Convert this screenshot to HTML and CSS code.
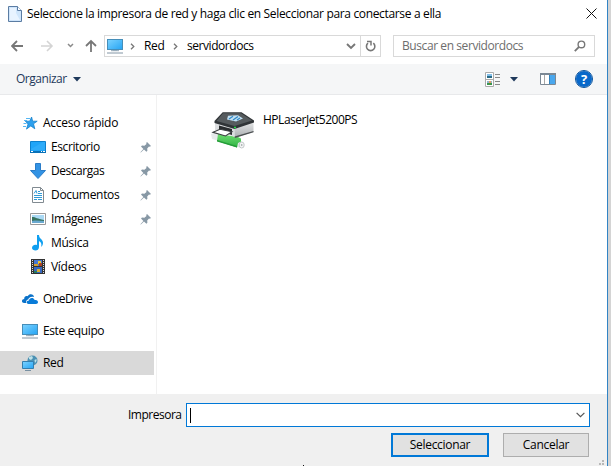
FILE: index.html
```html
<!DOCTYPE html>
<html lang="es">
<head>
<meta charset="utf-8">
<title>Seleccionar impresora</title>
<link rel="stylesheet" href="styles.css">
</head>
<body>
<svg class="defs" width="0" height="0">
  <defs>
    <linearGradient id="screen" x1="0" y1="0" x2="1" y2="1"><stop offset="0" stop-color="#7dd3ff"/><stop offset="1" stop-color="#24a4f4"/></linearGradient>
    <linearGradient id="side" x1="0" y1="0" x2="0" y2="1"><stop offset="0" stop-color="#e8e9ea"/><stop offset="1" stop-color="#a9adb0"/></linearGradient>
    <linearGradient id="roll" x1="0" y1="0" x2="0" y2="1"><stop offset="0" stop-color="#6fdc70"/><stop offset="1" stop-color="#2fb344"/></linearGradient>
    <symbol id="pc" viewBox="0 0 16 16"><rect x=".5" y="1.5" width="15" height="10" fill="url(#screen)" stroke="#468eb9"/><path d="M6 12h4v1H6z" fill="#b9c7d2"/><path d="M4 12.700h8" stroke="#8fa5b5"/><path d="M0 15h16" stroke="#8295a5"/></symbol>
    <symbol id="pin" viewBox="0 0 11 11"><path d="M7 0l4 4-1.200.8-.8-.3-1.800 2 .2 2.300-1 .9L4 7.400.8 10.600l-.4-.4L3.400 7 1 4.500l1-.9 2.400.1L6.500 2 6.200.9z" fill="#8798a5"/></symbol>
  </defs>
</svg>
<div class="window">
  <header class="titlebar">
    <svg class="doc" width="14" height="16" viewBox="0 0 14 16"><path d="M.5.5h9l4 4v11H.5z" fill="#cfe5fb" stroke="#5b7ca3"/><path d="M2 2h6v5l4 7H2z" fill="#e8f3ff"/><path d="M9.500.5v4h4" fill="#fff" stroke="#5b7ca3"/></svg>
    <span class="t title">Seleccione la impresora de red y haga clic en Seleccionar para conectarse a ella</span>
    <svg class="close" width="11" height="11" viewBox="0 0 11 11"><path d="M.5.5l10 10M10.500.5l-10 10" stroke="#111" fill="none"/></svg>
  </header>
  <nav class="navbar">
    <svg class="arrows" width="88" height="14" viewBox="0 0 88 14" fill="none">
      <path d="M12 7H1M6 2L1 7l5 5" stroke="#777" stroke-width="1.800"/>
      <path d="M30 7h11M36 2l5 5-5 5" stroke="#d4d4d4" stroke-width="1.600"/>
      <path d="M57 5l2.500 2.500L62 5" stroke="#8a8a8a" stroke-width="1.500"/>
      <path d="M80 13V2M75 7l5-5 5 5" stroke="#777" stroke-width="1.800"/>
    </svg>
    <div class="address">
      <svg width="16" height="16"><use href="#pc"/></svg>
      <svg class="sep" width="5" height="7" viewBox="0 0 5 7"><path d="M1 .7l2.800 2.800L1 6.300" fill="none" stroke="#777" stroke-width="1.300"/></svg>
      <span class="t red">Red</span>
      <svg class="sep" width="5" height="7" viewBox="0 0 5 7"><path d="M1 .7l2.800 2.800L1 6.300" fill="none" stroke="#777" stroke-width="1.300"/></svg>
      <span class="t server">servidordocs</span>
      <svg class="drop" width="10" height="7" viewBox="0 0 10 7"><path d="M1 1l4 4 4-4" fill="none" stroke="#777" stroke-width="1.900"/></svg>
      <div class="refresh"><svg width="11" height="12" viewBox="0 0 11 12"><path d="M8.300 3.200A4.200 4.200 0 1 1 3 3.200" fill="none" stroke="#777" stroke-width="1.600"/><path d="M2 1.600h4v4" fill="none" stroke="#777" stroke-width="1.500"/></svg></div>
    </div>
    <div class="search"><span class="t query">Buscar en servidordocs</span>
      <svg width="12" height="12" viewBox="0 0 12 12"><circle cx="7.400" cy="4.400" r="3.300" fill="none" stroke="#777" stroke-width="1.400"/><path d="M5 6.900L.8 11.200" stroke="#777" stroke-width="1.800"/></svg></div>
  </nav>
  <div class="toolbar">
    <span class="t organize">Organizar</span>
    <svg class="caret" width="8" height="5" viewBox="0 0 8 5"><path d="M0 0h8L4 4.500z" fill="#1e395b"/></svg>
    <svg class="view" width="16" height="15" viewBox="0 0 16 15"><path d="M.5.5h8v14h-8zM.5 7.500h8" fill="#fff" stroke="#aaa"/><path d="M2 2h5v2H2z" fill="#82bee9"/><path d="M2 4h5v2H2z" fill="#286a86"/><path d="M2 9h5v2H2z" fill="#91b5cc"/><path d="M2 11h5v2H2z" fill="#3b944b"/><path d="M4 9h2v2H4z" fill="#e5a064"/><path d="M10 2.500h5M10 5.500h5M10 9.500h5M10 12.500h5" stroke="#888"/></svg>
    <svg class="caret viewcaret" width="8" height="5" viewBox="0 0 8 5"><path d="M0 0h8L4 4.500z" fill="#1e395b"/></svg>
    <svg class="pane" width="16" height="12" viewBox="0 0 16 12"><path d="M.5.500h15v11H.5z" fill="#fff" stroke="#7b8894"/><path d="M0 0h16v2H0z" fill="#7b8894"/><path d="M4.500 2v9" stroke="#a8a8a8"/><path d="M10 2h5v9h-5z" fill="#49a7ee"/><path d="M9.500 2v9" stroke="#3684bd"/></svg>
    <span class="help">?</span>
  </div>
  <main class="content">
    <aside class="tree">
      <div class="row root"><svg width="16" height="16" viewBox="0 0 16 16"><path d="M9.600 2l1 4.200h4.600l-3.700 2.600 1.300 5-4-2.900-4.300 3.200 1.600-5.200L3.300 6.200h4.400z" fill="#2ca0ee" stroke="#1682cb" stroke-width=".8"/><path d="M4 3.500h4M2 5.500h3M1.500 8.500h3M1 11.500h3" stroke="#55b6f3"/></svg><span class="t quick">Acceso rápido</span></div>
      <div class="row child"><svg width="16" height="16" viewBox="0 0 16 16"><path d="M.5 2.500h15v11H.5z" fill="#20a5f8" stroke="#0e80cc"/><path d="M1 10L13 3h2v8H1z" fill="#42b6fb" opacity=".45"/><path d="M0 12h16v2H0z" fill="#0871b8"/><path d="M1 12.500h2M11 12.500h1M13 12.500h2" stroke="#fff"/></svg><span class="t desk">Escritorio</span><svg class="pin" width="11" height="11"><use href="#pin"/></svg></div>
      <div class="row child"><svg width="16" height="16" viewBox="0 0 16 16"><path d="M5.500.5h5v7h5L8 15.500.5 7.500h5z" fill="#3293e4" stroke="#2a7cc8"/></svg><span class="t down">Descargas</span><svg class="pin" width="11" height="11"><use href="#pin"/></svg></div>
      <div class="row child"><svg width="16" height="16" viewBox="0 0 16 16"><path d="M2.500.5h8l3 3v12h-11z" fill="#fff" stroke="#818a91"/><path d="M10.500.5v3h3" fill="none" stroke="#818a91"/><path d="M4 6.500l2-3 1 3M8 4.500h2M8 6.500h4M4 8.500h8M4 10.500h8M4 12.500h3M8 12.500h4" fill="none" stroke="#309bd8"/></svg><span class="t docs">Documentos</span><svg class="pin" width="11" height="11"><use href="#pin"/></svg></div>
      <div class="row child"><svg width="16" height="16" viewBox="0 0 16 16"><path d="M.5 2.500h15v11H.5z" fill="#fff" stroke="#999"/><path d="M2 4h12v8H2z" fill="#aad9f4"/><path d="M2 6c4 0 5 2 12 3v1H2z" fill="#37735f"/><path d="M2 10c5-1 8 0 12 0v2H2z" fill="#6aa9d0"/></svg><span class="t imgs">Imágenes</span><svg class="pin" width="11" height="11"><use href="#pin"/></svg></div>
      <div class="row child"><svg width="16" height="16" viewBox="0 0 16 16"><path d="M7 0h2c0 4 4 4 4 8 0 2-1 3-2 4 1-3 0-5-2-6v6c0 5-7 4-7 1 0-2 2-4 5-3z" fill="#109ff0"/></svg><span class="t music">Música</span></div>
      <div class="row child"><svg width="16" height="16" viewBox="0 0 16 16"><path d="M1 0h14v15H1z" fill="#333"/><path d="M4 1h8v6H4z" fill="#4777d0"/><path d="M4 8h8v6H4z" fill="#3768bf"/><path d="M8 2h3v3H8z" fill="#edc52e"/><path d="M9 4h3v3H9z" fill="#a94227"/><path d="M4 5h4v2H4z" fill="#d69e2d"/><path d="M7 10h3v3H7z" fill="#d6aa31"/><path d="M4 12h3v2H4z" fill="#267b62"/><path d="M2.500 1v14M13.500 1v14" stroke="#ddd" stroke-dasharray="1 1"/></svg><span class="t video">Vídeos</span></div>
      <div class="row root gap"><svg width="16" height="16" viewBox="0 0 16 16"><path d="M2 12C-1 12-.5 8 2.200 8 2 5.500 4 4.500 5.500 5.200 7.500 1.800 12 3 12 6 8.500 5 6.500 7 6.300 8.600 4 9 3.800 11 4.300 12z" fill="#0b72c9"/><path d="M6.500 13C4 13 4 9.500 7 9.600 7 6.500 11.500 5.800 12.700 9 15 8.500 16 10 16 11.300 16 12.500 15 13 14 13z" fill="#087bd8"/></svg><span class="t one">OneDrive</span></div>
      <div class="row root gap"><svg width="16" height="16"><use href="#pc"/></svg><span class="t equipo">Este equipo</span></div>
      <div class="row root gap selected"><svg width="16" height="16" viewBox="0 0 16 16"><circle cx="10.500" cy="5.500" r="5" fill="#4c91b3"/><path d="M7 2l3-1 1 2-2 2-2-1zM12.500 5l2-1v2l-1.500 2z" fill="#bfe2e9"/><path d="M.5 6.500h11v7H.5z" fill="url(#screen)" stroke="#347fae"/><path d="M3 15.500h6" stroke="#7890a2"/></svg><span class="t">Red</span></div>
    </aside>
    <section class="files">
      <svg class="printer" width="46" height="40" viewBox="0 0 46 40">
        <path d="M1 24l5-2 5 2-2 7-7-2z" fill="#e6e9ea"/>
        <path d="M26 31l6 .8 1.500 6-7-.8z" fill="#e1e5e6"/>
        <path d="M8 24l20 3 3 1.500v3L28 33l-1 4.500L7 31z" fill="url(#roll)"/>
        <path d="M7 30l20 6v1.500L7 31.500z" fill="#249c38"/>
        <ellipse cx="31.700" cy="35" rx="2.500" ry="3" fill="#f4f5f5" stroke="#c4c8ca"/><ellipse cx="31.700" cy="35" rx=".8" ry="1.100" fill="#a8adaf"/>
        <path d="M5 12l20 6v9L5 20z" fill="#dbdddf"/>
        <path d="M24.500 17.500l19-6.500v11L25 27.500z" fill="url(#side)"/>
        <path d="M12.700 2.300L31.500 2.300 44 10.500v2L24.500 19 4.500 13v-2z" fill="#303437"/>
        <path d="M13 3.300h18L42 10.500 24.500 16 6.500 11z" fill="#565b5e"/>
        <path d="M18 5.700l10-.5 5 3.300-7 3-9-2z" fill="#c2e0f3"/>
        <path d="M19 9l4-2.700M23 10l5-3.500M27 10l3-2" stroke="#318ac7" stroke-width="1.300"/>
        <path d="M9 15.500l13 3.500v6L9 21z" fill="#292c2e"/>
        <path d="M3 22.300l7-3 12 2.400-6.500 4.300z" fill="#fff" stroke="#3b3e40" stroke-width="1.100"/>
        <path d="M24.500 26.500L43.500 21v1.300L25 28z" fill="#4c5052"/>
        <path d="M24 17.500h2" stroke="#21df46" stroke-width="1.300"/>
      </svg>
      <span class="t hp">HPLaserJet5200PS</span>
    </section>
  </main>
  <footer class="footer">
    <div class="field"><span class="t label">Impresora</span><div class="combo"><i class="cursor"></i><svg width="9" height="6" viewBox="0 0 9 6"><path d="M.6.800l3.900 3.900L8.400.8" fill="none" stroke="#555" stroke-width="1.200"/></svg></div></div>
    <div class="buttons"><div class="btn primary"><span class="t select">Seleccionar</span></div><div class="btn"><span class="t cancel">Cancelar</span></div></div>
    <svg class="grip" width="5" height="5" viewBox="0 0 5 5"><path d="M3 0h2v2H3zM0 3h2v2H0zM3 3h2v2H3z" fill="#b8b8b8"/></svg>
    <i class="speck"></i>
  </footer>
</div>
</body>
</html>
```
FILE: styles.css
```css
* { box-sizing: border-box; }
body { margin: 0; background: #d4d4d4; font: 12px/16px "Open Sans", "Noto Sans", sans-serif; color: #000; overflow: hidden; }
svg { display: block; flex: none; }
.defs { position: absolute; }
.t { white-space: nowrap; flex: none; font-size: 12px; letter-spacing: -0.3px; }
.window { width: 608px; height: 466px; border-right: 1px solid #3284c5; background: #fff; display: flex; flex-direction: column; }
.titlebar { height: 30px; display: flex; align-items: center; padding: 0 10px 3px 8px; }
.title { margin-left: 5px; letter-spacing: -0.34px; }
.close { margin-left: auto; }
.navbar { height: 34px; display: flex; padding: 5px 12px 7px 11px; }
.arrows { margin-top: 4px; }
.address { margin-left: 5px; width: 277px; height: 22px; border: 1px solid #d9d9d9; display: flex; align-items: center; padding-left: 2px; }
.sep { margin: 0 9px 0 7px; }
.address .red { width: 22px; }
.server { letter-spacing: -0.45px; }
.drop { margin-left: auto; margin-right: 4px; }
.refresh { width: 20px; height: 20px; border-left: 1px solid #d9d9d9; display: flex; align-items: center; justify-content: center; }
.search { margin-left: 12px; width: 202px; height: 22px; border: 1px solid #d9d9d9; display: flex; align-items: center; justify-content: space-between; padding: 0 8px; color: #6d6d6d; }
.query { letter-spacing: -0.42px; }
.toolbar { height: 31px; background: #f5f6f7; border-bottom: 1px solid #e8e9eb; display: flex; align-items: center; padding: 0 15px 0 16px; color: #1e395b; }
.organize { letter-spacing: -0.48px; }
.caret { margin-left: 6px; }
.view { margin-left: auto; }
.viewcaret { margin-left: 9px; }
.pane { margin-left: 22px; }
.help { margin-left: 20px; width: 16px; height: 16px; border-radius: 50%; background: #0868ca; color: #fff; font: bold 13px/16px "Open Sans", sans-serif; text-align: center; outline: 0.5px solid #07519d; }
.content { height: 299px; display: flex; }
.tree { width: 157px; border-right: 1px solid #f1f1f1; padding-top: 16px; }
.row { height: 24px; display: flex; align-items: center; width: 154px; }
.root { padding-left: 22px; }
.child { padding-left: 30px; }
.row .t { margin-left: 5px; }
.quick { letter-spacing: -0.25px; }
.desk, .imgs, .equipo { letter-spacing: -0.4px; }
.down { letter-spacing: -0.45px; }
.pin { margin-left: auto; margin-right: 3px; }
.gap { margin-top: 8px; }
.one { letter-spacing: -0.45px; }
.selected { background: #d9d9d9; }
.files { display: flex; align-items: flex-start; padding: 15px 0 0 53px; }
.hp { margin: 2px 0 0 7px; letter-spacing: -0.48px; }
.footer { height: 72px; background: #f0f0f0; position: relative; padding-top: 9px; }
.field { display: flex; align-items: center; padding-left: 128px; }
.label { width: 58px; letter-spacing: -0.5px; }
.combo { width: 404px; height: 24px; background: #fff; border: 1px solid #0078d7; display: flex; align-items: center; justify-content: space-between; padding: 0 4px 0 3px; }
.cursor { width: 1px; height: 15px; background: #000; }
.buttons { display: flex; justify-content: flex-end; gap: 14px; padding: 6px 18px 0 0; }
.btn { width: 86px; height: 24px; background: #e1e1e1; border: 1px solid #adadad; display: flex; align-items: center; justify-content: center; }
.primary { width: 98px; border: 2px solid #0078d7; }
.grip { position: absolute; right: 3px; bottom: 1px; }
.speck { position: absolute; left: 303px; bottom: 0; width: 1px; height: 1px; background: #111; }
```
